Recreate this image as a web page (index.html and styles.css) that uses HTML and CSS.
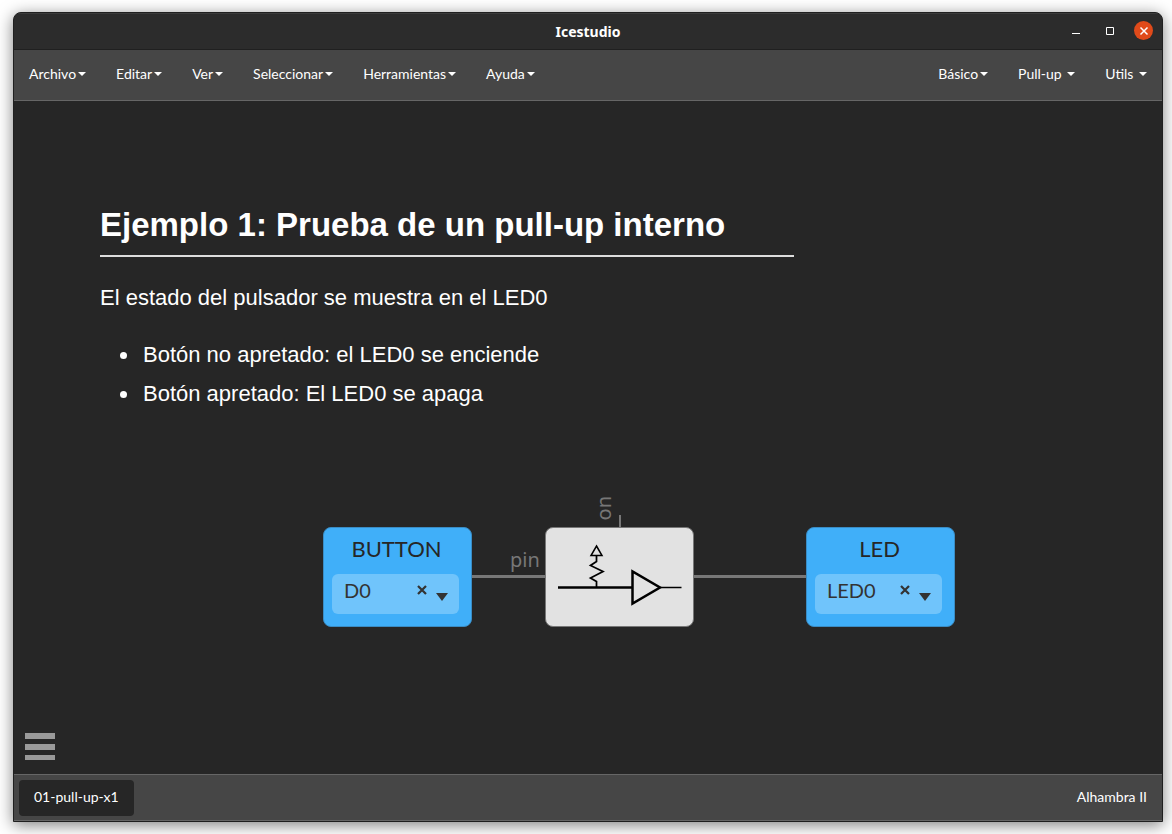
FILE: index.html
```html
<!DOCTYPE html>
<html lang="es">
<head>
<meta charset="utf-8">
<title>Icestudio</title>
<link rel="stylesheet" href="styles.css">
</head>
<body>
<div class="window">
  <header class="titlebar">
    <h1 class="titlebar-text">Icestudio</h1>
    <div class="window-controls">
      <button class="control" type="button" aria-label="Minimizar">
        <svg width="10" height="10" viewBox="0 0 10 10"><path d="M1 7.500H9" stroke="#fff" fill="none"/></svg>
      </button>
      <button class="control" type="button" aria-label="Maximizar">
        <svg width="10" height="10" viewBox="0 0 10 10"><path d="M1.500 1.500H8.500V8.500H1.500Z" stroke="#fff" fill="none"/></svg>
      </button>
      <button class="control control-close" type="button" aria-label="Cerrar">
        <svg width="10" height="10" viewBox="0 0 10 10"><path d="M1.500 1.500L8.500 8.500M8.500 1.500L1.500 8.500" stroke="#fff" stroke-width="1.500" fill="none"/></svg>
      </button>
    </div>
  </header>

  <nav class="navbar">
    <div class="menu">
      <button class="menu-item" type="button">Archivo<span class="caret"></span></button>
      <button class="menu-item" type="button">Editar<span class="caret"></span></button>
      <button class="menu-item" type="button">Ver<span class="caret"></span></button>
      <button class="menu-item" type="button">Seleccionar<span class="caret"></span></button>
      <button class="menu-item" type="button">Herramientas<span class="caret"></span></button>
      <button class="menu-item" type="button">Ayuda<span class="caret"></span></button>
    </div>
    <div class="menu">
      <button class="menu-item" type="button">Básico<span class="caret"></span></button>
      <button class="menu-item" type="button">Pull-up&nbsp;<span class="caret"></span></button>
      <button class="menu-item" type="button">Utils&nbsp;<span class="caret"></span></button>
    </div>
  </nav>

  <main class="canvas">
    <article class="node note">
      <h2 class="note-title">Ejemplo 1: Prueba de un pull-up interno</h2>
      <p class="note-text">El estado del pulsador se muestra en el LED0</p>
      <ul class="note-list">
        <li>Botón no apretado: el LED0 se enciende</li>
        <li>Botón apretado: El LED0 se apaga</li>
      </ul>
    </article>

    <div class="wire wire-pin"></div>
    <div class="wire wire-out"></div>
    <div class="wire wire-on"></div>
    <span class="port-label port-pin">pin</span>
    <span class="port-label port-on">on</span>

    <section class="node block block-input">
      <label class="block-name" for="pin-button">BUTTON</label>
      <div class="picker">
        <select class="picker-select" id="pin-button"><option>D0</option></select>
        <button class="picker-clear" type="button" aria-label="Quitar D0"><svg width="10" height="10" viewBox="0 0 10 10"><path d="M1 1L9 9M9 1L1 9" stroke="#333" stroke-width="2.250" fill="none"/></svg></button>
        <svg class="picker-arrow" width="12" height="8" viewBox="0 0 12 8"><path d="M0 0H12L6 8Z" fill="#333"/></svg>
      </div>
    </section>

    <section class="node block block-pullup">
      <svg width="147" height="98" viewBox="0 0 147 98" fill="none" stroke="#000" role="img" aria-label="Pull-up">
        <path d="M12 59.500H86" stroke-width="2.500"/>
        <path d="M114 59.500H135.500" stroke-width="1.500"/>
        <path d="M86.500 43.500V75.500L114 59.500Z" stroke-width="2.500"/>
        <path d="M50.500 18L56 27.500H45Z" stroke-width="1.500"/>
        <path d="M50.500 28V33.500L44.500 37.500L57 43.500L44.500 50L50.500 53.500V59" stroke-width="1.750"/>
      </svg>
    </section>

    <section class="node block block-output">
      <label class="block-name" for="pin-led">LED</label>
      <div class="picker">
        <select class="picker-select" id="pin-led"><option>LED0</option></select>
        <button class="picker-clear" type="button" aria-label="Quitar LED0"><svg width="10" height="10" viewBox="0 0 10 10"><path d="M1 1L9 9M9 1L1 9" stroke="#333" stroke-width="2.250" fill="none"/></svg></button>
        <svg class="picker-arrow" width="12" height="8" viewBox="0 0 12 8"><path d="M0 0H12L6 8Z" fill="#333"/></svg>
      </div>
    </section>

    <button class="drawer" type="button" aria-label="Menú">
      <svg width="30" height="27" viewBox="0 0 30 27" fill="#999"><path d="M0 0H30V6H0ZM0 11H30V17H0ZM0 22H30V27H0Z"/></svg>
    </button>
  </main>

  <footer class="statusbar">
    <button class="tab" type="button">01-pull-up-x1</button>
    <span class="board">Alhambra II</span>
  </footer>
</div>
</body>
</html>
```

FILE: styles.css
```css
* {
  box-sizing: border-box;
}

body {
  margin: 0;
  padding: 12px 9px 12px 13px;
  height: 100vh;
  background: #fff;
  color: #fff;
  font-family: Lato, "Noto Sans", sans-serif;
  font-size: 14px;
  line-height: 20px;
}

button,
select {
  margin: 0;
  padding: 0;
  border: 0;
  background: none;
  color: inherit;
  font: inherit;
}

svg {
  display: block;
}

.window {
  display: flex;
  flex-direction: column;
  height: 100%;
  border: 1px solid #202020;
  border-radius: 8px 8px 0 0;
  overflow: hidden;
  background: #262626;
  box-shadow: 0 3px 16px rgba(0, 0, 0, 0.5);
}

.titlebar {
  position: relative;
  display: flex;
  align-items: center;
  justify-content: center;
  height: 37px;
  border-top: 1px solid #3c3c3c;
  border-bottom: 1px solid #202020;
  background: #2c2c2c;
}

.titlebar-text {
  margin: 0;
  font-family: "Noto Sans", sans-serif;
  font-size: 14px;
  font-weight: 700;
}

.window-controls {
  position: absolute;
  top: 7px;
  right: 9px;
  display: flex;
  gap: 15px;
}

.control {
  display: grid;
  place-items: center;
  width: 19px;
  height: 19px;
  border-radius: 50%;
}

.control-close {
  background: #e04a1a;
}

.navbar {
  display: flex;
  justify-content: space-between;
  height: 51px;
  border-bottom: 1px solid #666;
  background: #464646;
}

.menu {
  display: flex;
}

.menu-item {
  display: flex;
  align-items: center;
  padding: 0 15px 2px;
}

.caret {
  margin-left: 2px;
  border: 4px solid transparent;
  border-top-color: #fff;
  border-bottom: 0;
}

.canvas {
  position: relative;
  flex: 1;
  background: #262626;
}

.node {
  position: absolute;
}

.note {
  left: 86px;
  top: 102px;
  width: 694px;
  font-family: "Liberation Sans", Arial, sans-serif;
  font-size: 22px;
  line-height: 33px;
}

.note-title {
  margin: 0 0 24px;
  padding-bottom: 8px;
  border-bottom: 2px solid #ddd;
  font-size: 33px;
  line-height: 44px;
}

.note-text {
  margin: 0 0 24px;
}

.note-list {
  display: grid;
  gap: 6px;
  margin: 0;
  padding-left: 40px;
}

.note-list li {
  padding-left: 3px;
}

.wire {
  position: absolute;
  background: #777;
}

.wire-pin {
  left: 457px;
  top: 474px;
  width: 75px;
  height: 3px;
}

.wire-out {
  left: 680px;
  top: 474px;
  width: 112px;
  height: 3px;
}

.wire-on {
  left: 605px;
  top: 414px;
  width: 2px;
  height: 13px;
}

.port-label {
  position: absolute;
  color: #777;
  font-family: "Noto Sans", sans-serif;
  font-size: 20px;
  line-height: 24px;
}

.port-pin {
  left: 496px;
  top: 447px;
}

.port-on {
  left: 578px;
  top: 395px;
  writing-mode: vertical-rl;
  transform: rotate(180deg);
}

.block {
  top: 426px;
  width: 149px;
  height: 100px;
  border: 1px solid #777;
  border-radius: 8px;
}

.block-input,
.block-output {
  display: flex;
  flex-direction: column;
  gap: 12px;
  padding: 8px 12px 12px 8px;
  border-color: #3a8cc4;
  background: #40aff9;
  color: #262626;
}

.block-input {
  left: 309px;
}

.block-pullup {
  left: 531px;
  background: #e2e2e2;
}

.block-output {
  left: 792px;
}

.block-name {
  padding-left: 2px;
  font-size: 22px;
  line-height: 26px;
  text-align: center;
}

.picker {
  position: relative;
  height: 40px;
  border-radius: 6px;
  background: #70c4fb;
  color: #333;
}

.picker-select {
  width: 100%;
  height: 32px;
  padding-left: 12px;
  appearance: none;
  font-size: 20px;
}

.picker-clear {
  position: absolute;
  top: 11px;
  right: 32px;
}

.picker-arrow {
  position: absolute;
  top: 19px;
  right: 11px;
}

.drawer {
  position: absolute;
  left: 11px;
  bottom: 14px;
}

.statusbar {
  display: flex;
  align-items: center;
  justify-content: space-between;
  height: 47px;
  padding: 0 15px 0 5px;
  border-top: 1px solid #666;
  border-bottom: 1px solid #666;
  background: #464646;
}

.tab {
  height: 36px;
  padding: 0 15px 2px;
  border-radius: 4px;
  background: #262626;
}

.board {
  padding-bottom: 2px;
}
```
